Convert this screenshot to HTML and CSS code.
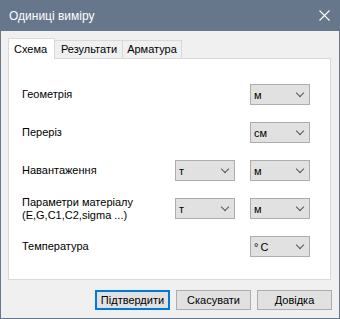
FILE: index.html
```html
<!DOCTYPE html>
<html>
<head>
<meta charset="utf-8">
<link rel="stylesheet" href="styles.css">
</head>
<body>
<div class="window">
  <div class="titlebar">
    <span class="title">Одиниці виміру</span>
    <svg class="close" width="11" height="11" viewBox="0 0 11 11"><path d="M0.5 0.5 L10.5 10.5 M10.5 0.5 L0.5 10.5" stroke="#fff" stroke-width="1.1" fill="none"/></svg>
  </div>
  <div class="content">
    <div class="tabs">
      <div class="tab active">Схема</div>
      <div class="tab t2">Результати</div>
      <div class="tab t3">Арматура</div>
    </div>
    <div class="panel">
      <div class="grid">
        <div class="label">Геометрія</div>
        <div></div>
        <div class="combo"><span>м</span><i></i></div>

        <div class="label">Переріз</div>
        <div></div>
        <div class="combo"><span>см</span><i></i></div>

        <div class="label">Навантаження</div>
        <div class="combo"><span>т</span><i></i></div>
        <div class="combo"><span>м</span><i></i></div>

        <div class="label">Параметри матеріалу<br>(E,G,C1,C2,sigma ...)</div>
        <div class="combo"><span>т</span><i></i></div>
        <div class="combo"><span>м</span><i></i></div>

        <div class="label">Температура</div>
        <div></div>
        <div class="combo"><span>°&thinsp;C</span><i></i></div>
      </div>
    </div>
    <div class="buttons">
      <div class="btn default">Підтвердити</div>
      <div class="btn">Скасувати</div>
      <div class="btn">Довідка</div>
    </div>
  </div>
</div>
</body>
</html>
```
FILE: styles.css
```css
html, body {
  margin: 0;
  padding: 0;
}
body {
  width: 340px;
  height: 319px;
  overflow: hidden;
  font-family: "Liberation Sans", Arial, sans-serif;
  font-size: 11px;
  color: #000;
}
.window {
  width: 340px;
  height: 319px;
  box-sizing: border-box;
  background: #f0f0f0;
  border: 1px solid #66768b;
  border-top: none;
  display: flex;
  flex-direction: column;
}
.titlebar {
  height: 31px;
  background: #66768b;
  margin: 0 -1px;
  display: flex;
  align-items: center;
  justify-content: space-between;
  padding: 0 10px 0 9px;
  box-sizing: border-box;
}
.title {
  color: #fff;
  font-size: 12px;
  line-height: 16px;
  margin-top: 1px;
}
.close {
  display: block;
}
.content {
  padding: 7px 8px 0 7px;
  display: flex;
  flex-direction: column;
}
.tabs {
  height: 20px;
  display: flex;
  align-items: flex-end;
}
.tab {
  box-sizing: border-box;
  border: 1px solid #d9d9d9;
  border-bottom: none;
  height: 18px;
  line-height: 16px;
  background: #f0f0f0;
  text-align: center;
}
.tab.active {
  height: 21px;
  margin-bottom: -1px;
  background: #fff;
  width: 47px;
  line-height: 20px;
  position: relative;
  z-index: 1;
  padding-right: 2px;
}
.tab.t2 {
  width: 68px;
  border-left: none;
  padding-left: 1px;
}
.tab.t3 {
  width: 60px;
  border-left: 1px solid #d9d9d9;
  margin-left: -1px;
}
.panel {
  box-sizing: border-box;
  height: 222px;
  width: 323px;
  background: #fff;
  border: 1px solid #d9d9d9;
  padding: 25px 0 0 13px;
}
.grid {
  display: grid;
  grid-template-columns: 138px 60px 60px;
  column-gap: 15px;
  grid-template-rows: 21px 21px 21px 21px 21px;
  row-gap: 17px;
  align-items: center;
}
.label {
  line-height: 13px;
}
.combo {
  box-sizing: border-box;
  height: 21px;
  width: 60px;
  background: #e1e1e1;
  border: 1px solid #adadad;
  display: flex;
  align-items: center;
  justify-content: space-between;
  padding: 0 5px 0 3px;
}
.combo span {
  line-height: 13px;
  margin-top: 1px;
}
.combo i {
  display: block;
  width: 5px;
  height: 5px;
  border-right: 1px solid #555;
  border-bottom: 1px solid #555;
  transform: rotate(45deg);
  margin-top: -4px;
  margin-right: 1px;
}
.buttons {
  display: flex;
  justify-content: flex-end;
  gap: 6px;
  margin-top: 10px;
  margin-right: -1px;
}
.btn {
  box-sizing: border-box;
  width: 75px;
  height: 20px;
  background: #e1e1e1;
  border: 1px solid #adadad;
  text-align: center;
  line-height: 18px;
}
.btn.default {
  border: 2px solid #0078d7;
  line-height: 16px;
}
```
